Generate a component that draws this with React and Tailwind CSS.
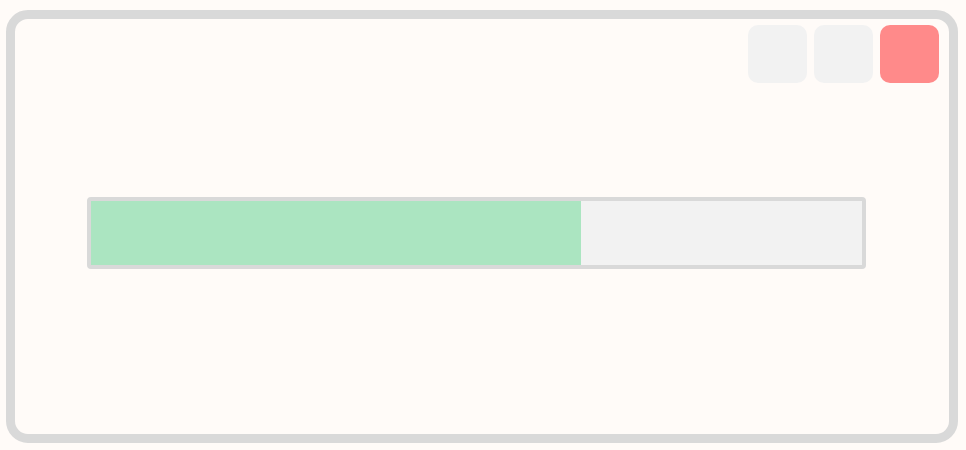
export default function App() {
  return (
    <div className="w-[966px] h-[450px] bg-[#fffbf8] pt-[10px] pl-[6px]">
      <div className="w-[952px] h-[433px] border-[9px] border-[#d9d9d9] rounded-[22px] bg-[#fffbf8] flex flex-col">
        <div className="flex justify-end gap-[7px] pt-[6px] pr-[10px]">
          <div className="w-[59px] h-[58px] rounded-[10px] bg-[#f2f2f2]" />
          <div className="w-[59px] h-[58px] rounded-[10px] bg-[#f2f2f2]" />
          <div className="w-[59px] h-[58px] rounded-[10px] bg-[#ff8a8a]" />
        </div>
        <div className="mt-[114px] ml-[72px] w-[779px] h-[72px] border-4 border-[#d9d9d9] rounded-[4px] bg-[#f2f2f2] overflow-hidden flex">
          <div className="w-[490px] h-full bg-[#abe5c1]" />
        </div>
      </div>
    </div>
  );
}
